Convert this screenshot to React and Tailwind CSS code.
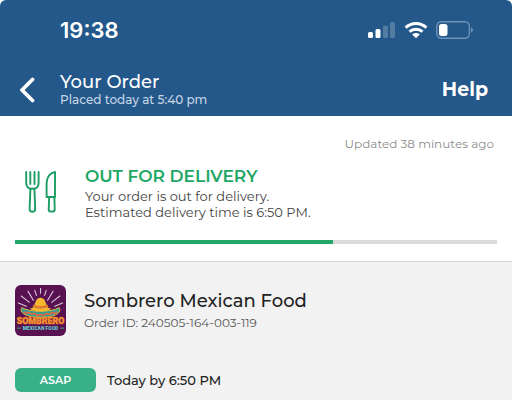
const order = {
  placed: "Placed today at 5:40 pm",
  updated: "Updated 38 minutes ago",
  restaurant: "Sombrero Mexican Food",
  id: "240505-164-003-119",
  progress: 66,
};

function SignalIcon() {
  return (
    <svg className="w-7 h-[18px]" viewBox="0 0 28 18" fill="white" aria-hidden="true">
      <rect x="0" y="11" width="5" height="6" rx="1.5" />
      <rect x="7.5" y="8" width="5" height="9" rx="1.5" />
      <rect x="15" y="4.5" width="5" height="12.5" rx="1.5" opacity=".22" />
      <rect x="22" y="1" width="5" height="16" rx="1.5" opacity=".22" />
    </svg>
  );
}

function WifiIcon() {
  return (
    <svg className="w-6 h-[18px]" viewBox="0 0 24 18" fill="none" stroke="white" strokeWidth="3" aria-hidden="true">
      <path d="M1.6 6.6C7.5 1 16.5 1 22.4 6.6" />
      <path d="M5.5 10.7c3.8-3.4 9.2-3.4 13 0" />
      <path d="M8.2 13.5c2.2-2 5.4-2 7.6 0L12 17.2Z" fill="white" stroke="none" />
    </svg>
  );
}

function BatteryIcon() {
  return (
    <svg className="w-[38px] h-[18px]" viewBox="0 0 38 18" fill="none" aria-hidden="true">
      <rect x=".8" y=".8" width="32.6" height="16.4" rx="4.5" stroke="#6f93b6" strokeWidth="1.4" />
      <rect x="3" y="3" width="8.5" height="12" rx="2.5" fill="white" />
      <path d="M35 6.5c2.6.8 2.6 4.2 0 5Z" fill="#6f93b6" />
    </svg>
  );
}

function CutleryIcon() {
  return (
    <svg
      className="w-8 h-[42px]"
      viewBox="0 0 32 42"
      fill="none"
      stroke="#1b9d63"
      strokeWidth="1.9"
      strokeLinecap="round"
      strokeLinejoin="round"
      aria-hidden="true"
    >
      <path d="M1.2 1v10.5c0 3.5 1.6 5.6 4 6.2h4.4c2.4-.6 4-2.7 4-6.2V1M5.3 1v12M9.5 1v12" />
      <path d="M5.4 17.7 4.6 38.3c0 3.3 5.6 3.3 5.6 0L9.4 17.7" />
      <path d="M30 1v25h-8.4V12C21.6 5.5 25.6 1.6 30 1Z" />
      <path d="m24.2 26-.5 12.4c0 3 6 3 6 0L29.4 26" />
    </svg>
  );
}

function RestaurantLogo() {
  return (
    <svg className="w-[51px] h-[51px] rounded-md" viewBox="0 0 52 52" role="img" aria-label="Sombrero Mexican Food logo">
      <rect width="52" height="52" rx="4" fill="#581252" />
      <path
        d="M3 18l9 4M6 11l9 7M13 6l6 10M20 5l2 6M26 3v6M32 5l-2 6M39 6l-6 10M46 11l-9 7M49 18l-9 4"
        stroke="#d9c4d8"
        strokeWidth="1.1"
      />
      <path d="M7 23c7 5 31 5 38 0 3 4-2 10-19 10S4 27 7 23Z" fill="#2f9f96" stroke="#e9b83d" strokeWidth="1" />
      <path d="M9 27l2 2 3-1 3 2 3-1 3 2 3-1 3 1 3-2 3 1 3-2 3 1 2-2" fill="none" stroke="#e8643b" strokeWidth="1.6" />
      <path d="M15 24c4-1 5-2 5-5 1 0 1-6 6-6s5 6 6 6c0 3 1 4 5 5-4 4-18 4-22 0Z" fill="#f4b92f" />
      <path d="M19 20c4 2 10 2 14 0l1 2c-4 3-12 3-16 0Z" fill="#e07a35" />
      <text
        x="26"
        y="40"
        textAnchor="middle"
        fontFamily="Roboto, sans-serif"
        fontSize="9"
        fontWeight="900"
        fill="#f9a02f"
        stroke="#f07f2c"
        strokeWidth=".5"
      >
        SOMBRERO
      </text>
      <text x="26" y="46" textAnchor="middle" fontFamily="Roboto, sans-serif" fontSize="5" fontWeight="900" fill="#63cbd0">
        MEXICAN FOOD
      </text>
      <path d="M2 44h4M46 44h4" stroke="#42a878" strokeWidth="1" />
    </svg>
  );
}

export default function App() {
  return (
    <div className="min-h-screen flex flex-col bg-white text-[#222] font-['Montserrat','Inter',sans-serif]">
      <header className="rounded-t-md bg-[#24588a] text-white pt-4 pb-2">
        <div className="flex items-center justify-between pl-[60px] pr-[38px] h-7">
          <span className="font-['Inter',sans-serif] text-[22px] leading-7 font-semibold">19:38</span>
          <div className="flex items-center gap-2">
            <SignalIcon />
            <WifiIcon />
            <BatteryIcon />
          </div>
        </div>
        <div className="mt-7 flex items-center pl-5 pr-6">
          <button type="button" aria-label="Back" className="w-10 shrink-0">
            <svg className="w-4 h-7" viewBox="0 0 16 28" fill="none" stroke="white" strokeWidth="3.8" aria-hidden="true">
              <path d="M12.5 3.5 2 14l10.5 10.5" strokeLinecap="round" strokeLinejoin="round" />
            </svg>
          </button>
          <div className="flex-1">
            <h1 className="text-[18px] leading-5 font-medium">Your Order</h1>
            <p className="text-[12px] leading-4 font-medium text-[#c6d6e6]">{order.placed}</p>
          </div>
          <a href="#help" className="text-[19px] leading-6 font-bold">Help</a>
        </div>
      </header>

      <section className="px-[15px] pt-5 pb-[17px]">
        <p className="pr-[3px] text-right text-[12px] leading-4 text-[#8c8c8c]">{order.updated}</p>
        <div className="mt-3 flex items-center">
          <div className="w-[70px] shrink-0 pl-[10px]">
            <CutleryIcon />
          </div>
          <div>
            <h2 className="text-[17px] leading-6 font-semibold text-[#1ea765]">OUT FOR DELIVERY</h2>
            <p className="text-[13px] leading-4 text-[#444]">Your order is out for delivery.</p>
            <p className="text-[13px] leading-4 text-[#444]">Estimated delivery time is 6:50 PM.</p>
          </div>
        </div>
        <div
          className="mt-5 h-1 bg-[#dadada]"
          role="progressbar"
          aria-label="Delivery progress"
          aria-valuenow={order.progress}
          aria-valuemin={0}
          aria-valuemax={100}
        >
          <div className="h-full bg-[#23a768]" style={{ width: `${order.progress}%` }} />
        </div>
      </section>

      <section className="flex-1 border-t border-[#d8d8d8] bg-[#f2f2f2] px-[15px] pt-[23px] pb-2">
        <div className="flex items-center gap-[18px]">
          <RestaurantLogo />
          <div>
            <h2 className="text-[18px] leading-6 font-medium">{order.restaurant}</h2>
            <p className="text-[12px] leading-5 text-[#555]">Order ID: {order.id}</p>
          </div>
        </div>
        <div className="mt-8 flex items-center gap-[11px]">
          <span className="w-[81px] rounded-md bg-[#38b088] text-center text-[11px] leading-6 font-semibold text-white">ASAP</span>
          <span className="text-[13px] leading-6 font-medium">Today by 6:50 PM</span>
        </div>
      </section>
    </div>
  );
}
